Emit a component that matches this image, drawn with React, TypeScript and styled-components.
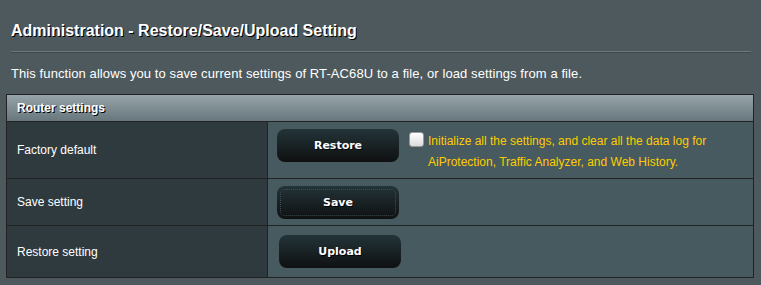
import { FC } from "react";
import styled, { createGlobalStyle } from "styled-components";

const GlobalStyle = createGlobalStyle`
  html, body {
    margin: 0;
    padding: 0;
    background: #4d595d;
  }
  body {
    font-family: "Liberation Sans", Arial, sans-serif;
    color: #fff;
  }
`;

const Page = styled.div`
  width: 761px;
  height: 285px;
  background: #4d595d;
  box-sizing: border-box;
  padding: 19px 0 0 6px;
`;

const Title = styled.div`
  margin-left: 5px;
  font-size: 16px;
  font-weight: bold;
  line-height: 24px;
  color: #fff;
  text-shadow: 1px 1px 0 #000;
`;

const SplitLine = styled.div`
  margin: 8px 0 0 5px;
  width: 740px;
  height: 1px;
  background: #6b787d;
  border-bottom: 1px solid #3e484c;
`;

const Desc = styled.div`
  margin: 13px 0 0 5px;
  font-size: 13px;
  letter-spacing: 0.09px;
  line-height: 16px;
  color: #fff;
`;

const Table = styled.div`
  margin-top: 12px;
  width: 748px;
  box-sizing: border-box;
  border: 1px solid #222;
  display: grid;
  grid-template-columns: 261px 1fr;
`;

const Head = styled.div`
  grid-column: 1 / span 2;
  height: 27px;
  box-sizing: border-box;
  padding-left: 10px;
  display: flex;
  align-items: center;
  background: linear-gradient(#96a4a9, #68777d);
  border-bottom: 1px solid #222;
  font-size: 12px;
  font-weight: bold;
  color: #fff;
  text-shadow: 1px 1px 0 #000;
`;

const Label = styled.div<{ $h: number; $last?: boolean }>`
  height: ${(p) => p.$h}px;
  box-sizing: border-box;
  padding-left: 10px;
  display: flex;
  align-items: center;
  background: #2f3a3f;
  border-right: 1px solid #222;
  border-bottom: ${(p) => (p.$last ? "none" : "1px solid #222")};
  font-size: 12px;
  color: #fff;
`;

const Cell = styled.div<{ $h: number; $last?: boolean; $pl?: number; $pt: number }>`
  height: ${(p) => p.$h}px;
  box-sizing: border-box;
  padding: ${(p) => p.$pt}px 0 0 ${(p) => p.$pl ?? 9}px;
  display: flex;
  align-items: flex-start;
  background: #475a5f;
  border-bottom: ${(p) => (p.$last ? "none" : "1px solid #222")};
`;

const Button = styled.button<{ $focus?: boolean }>`
  width: 122px;
  height: 33px;
  flex: none;
  border: 0;
  border-radius: 8px;
  background: linear-gradient(#233438, #0f1011);
  color: #fff;
  font-family: "DejaVu Sans", Verdana, sans-serif;
  font-size: 11px;
  font-weight: bold;
  text-shadow: 1px 1px 0 #000;
  cursor: pointer;
  outline: ${(p) => (p.$focus ? "1px dotted #3f4d52" : "none")};
  outline-offset: -4px;
`;

const CheckBox = styled.span`
  flex: none;
  width: 13px;
  height: 13px;
  margin: 3px 4px 0 10px;
  border: 1px solid #999;
  border-radius: 3px;
  background: linear-gradient(#ffffff, #dcdcdc);
`;

const Note = styled.div`
  font-size: 12px;
  line-height: 21px;
  margin-top: 2px;
  color: #ffcc00;
`;

const App: FC = () => {
  return (
    <Page>
      <GlobalStyle />
      <Title>Administration - Restore/Save/Upload Setting</Title>
      <SplitLine />
      <Desc>
        This function allows you to save current settings of RT-AC68U to a
        file, or load settings from a file.
      </Desc>
      <Table>
        <Head>Router settings</Head>
        <Label $h={57}>Factory default</Label>
        <Cell $h={57} $pt={7}>
          <Button>Restore</Button>
          <CheckBox />
          <Note>
            Initialize all the settings, and clear all the data log for
            <br />
            AiProtection, Traffic Analyzer, and Web History.
          </Note>
        </Cell>
        <Label $h={47}>Save setting</Label>
        <Cell $h={47} $pt={7}>
          <Button $focus>Save</Button>
        </Cell>
        <Label $h={51} $last>
          Restore setting
        </Label>
        <Cell $h={51} $pt={9} $pl={11} $last>
          <Button>Upload</Button>
        </Cell>
      </Table>
    </Page>
  );
};

export default App;
